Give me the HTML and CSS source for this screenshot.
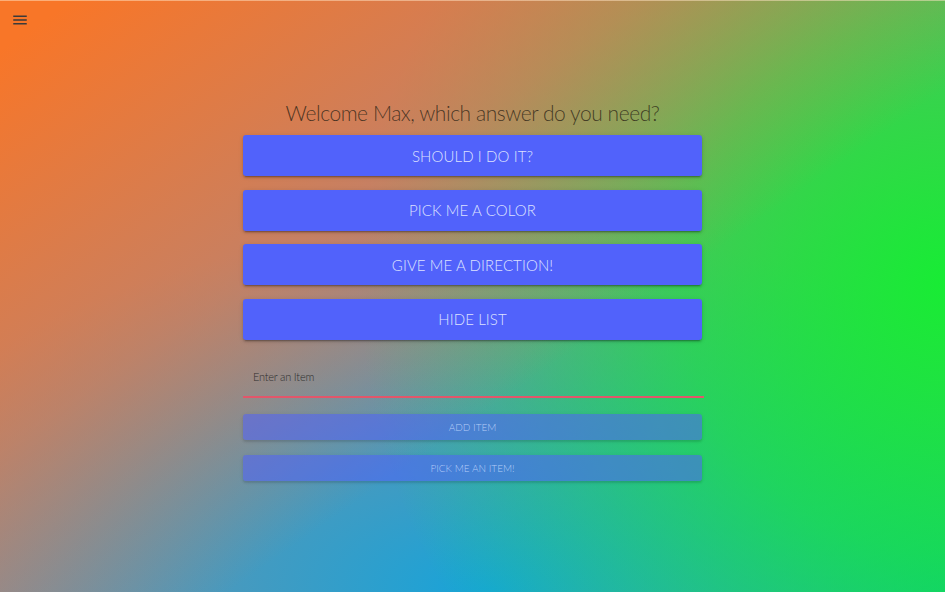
FILE: index.html
```html
<!DOCTYPE html>
<html>
<head>
<meta charset="utf-8">
<link rel="stylesheet" href="styles.css">
</head>
<body>
<div class="page">
  <header class="topbar">
    <svg class="menu-icon" viewBox="0 0 24 24" width="18" height="18"><path d="M3 18h18v-2H3v2zm0-5h18v-2H3v2zm0-7v2h18V6H3z" fill="#3a3a3a"/></svg>
  </header>
  <main class="main">
    <h1 class="title">Welcome Max, which answer do you need?</h1>
    <div class="actions">
      <button class="btn">SHOULD I DO IT?</button>
      <button class="btn">PICK ME A COLOR</button>
      <button class="btn">GIVE ME A DIRECTION!</button>
      <button class="btn">HIDE LIST</button>
    </div>
    <div class="field">
      <label class="field-label">Enter an Item</label>
      <div class="field-line"></div>
    </div>
    <div class="small-actions">
      <button class="btn-small">ADD ITEM</button>
      <button class="btn-small">PICK ME AN ITEM!</button>
    </div>
  </main>
</div>
</body>
</html>
```
FILE: styles.css
```css
html, body {
  margin: 0;
  padding: 0;
  height: 100%;
}
body {
  font-family: "Lato", "Noto Sans", sans-serif;
  font-weight: 300;
  background-color: #928a94;
  background-image:
    linear-gradient(145deg, rgba(248, 118, 40, 1) 4%, rgba(240, 120, 60, 0.55) 36%, rgba(240, 120, 60, 0) 60%),
    radial-gradient(ellipse 62% 100% at 100% 48%, rgba(24, 236, 52, 1) 0%, rgba(24, 236, 52, 0.65) 45%, rgba(24, 236, 52, 0) 100%),
    radial-gradient(ellipse 70% 62% at 52% 100%, rgba(22, 164, 218, 1) 0%, rgba(22, 164, 218, 0) 100%),
    radial-gradient(ellipse 55% 70% at 100% 100%, rgba(8, 196, 130, 1) 0%, rgba(8, 196, 130, 0) 100%);
  border-top: 1px solid rgba(255, 230, 200, 0.5);
  box-sizing: border-box;
}
.page {
  min-height: 591px;
}
.topbar {
  display: flex;
  padding: 10px 11px 0;
  height: 19px;
}
.menu-icon {
  display: block;
}
.main {
  width: 459px;
  margin: 0 auto;
  padding-top: 70px;
  display: flex;
  flex-direction: column;
}
.title {
  margin: 0;
  font-weight: 300;
  font-size: 21px;
  line-height: 26px;
  color: rgba(40, 30, 20, 0.78);
  text-align: center;
  letter-spacing: -0.45px;
  white-space: nowrap;
}
.actions {
  margin-top: 9px;
  display: flex;
  flex-direction: column;
  gap: 13.6px;
}
.btn {
  height: 41px;
  border: none;
  border-radius: 3px;
  background: #5162fb;
  color: #dde1ff;
  font-family: "Lato", "Noto Sans", sans-serif;
  font-weight: 300;
  font-size: 15px;
  letter-spacing: 0.1px;
  box-shadow: 0 2px 2px rgba(0,0,0,.14), 0 3px 1px -2px rgba(0,0,0,.2), 0 1px 5px rgba(0,0,0,.12);
  padding: 0;
}
.field {
  padding-top: 30px;
  display: flex;
  flex-direction: column;
}
.field-label {
  padding-left: 10px;
  font-size: 11px;
  line-height: 14px;
  color: #2e2e2e;
  letter-spacing: -0.2px;
}
.field-line {
  margin-top: 12px;
  height: 2px;
  width: 461px;
  background: #e2566a;
}
.small-actions {
  margin-top: 16px;
  display: flex;
  flex-direction: column;
  gap: 15px;
}
.btn-small {
  height: 26px;
  border: none;
  border-radius: 3px;
  background: rgba(80, 96, 248, 0.55);
  color: rgba(200, 220, 255, 0.85);
  font-family: "Lato", "Noto Sans", sans-serif;
  font-weight: 300;
  font-size: 10px;
  box-shadow: 0 2px 2px rgba(0,0,0,.1), 0 1px 4px rgba(0,0,0,.08);
  padding: 0;
}
```
